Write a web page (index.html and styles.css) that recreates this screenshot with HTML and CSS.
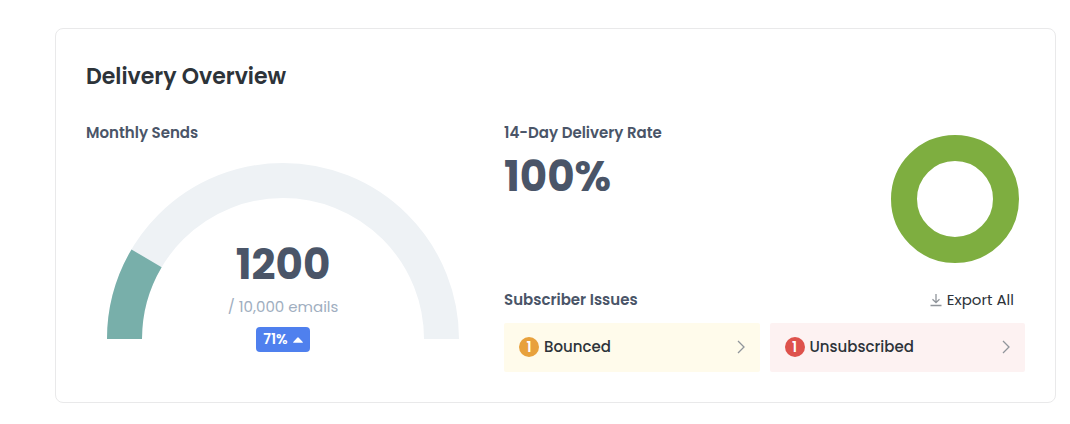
FILE: index.html
```html
<!DOCTYPE html>
<html lang="en">
<head>
    <meta charset="UTF-8">
    <meta name="viewport" content="width=device-width, initial-scale=1.0">
    <title>Delivery Overview</title>
    <link rel="stylesheet" href="styles.css">
</head>
<body>
    <main class="card">
        <h1 class="card-title">Delivery Overview</h1>

        <div class="columns">
            <section class="sends">
                <h2 class="label">Monthly Sends</h2>
                <div class="gauge">
                    <svg class="gauge-chart" viewBox="0 0 352 176" aria-hidden="true">
                        <path class="gauge-track" d="M17.5 176a158.5 158.5 0 0 1 317 0"/>
                        <path class="gauge-fill" d="M17.5 176a158.5 158.5 0 0 1 317 0" pathLength="100" stroke-dasharray="17 100"/>
                    </svg>
                    <div class="gauge-text">
                        <strong class="number">1200</strong>
                        <span class="limit">/ 10,000 emails</span>
                        <span class="change">71%
                            <svg width="10" height="6" viewBox="0 0 10 6" aria-hidden="true"><path d="M.6 5.8Q-.3 5.6.5 4.7L4.2.7Q5 0 5.8.7L9.5 4.7Q10.3 5.6 9.4 5.8Z" fill="currentColor"/></svg>
                        </span>
                    </div>
                </div>
            </section>

            <section class="delivery">
                <div class="rate">
                    <div>
                        <h2 class="label">14-Day Delivery Rate</h2>
                        <strong class="number">100%</strong>
                    </div>
                    <svg class="donut" viewBox="0 0 128 128" aria-hidden="true">
                        <circle cx="64" cy="64" r="51"/>
                    </svg>
                </div>

                <div class="issues-header">
                    <h2 class="label">Subscriber Issues</h2>
                    <button type="button" class="export">
                        <svg width="12" height="14" viewBox="0 0 12 14" aria-hidden="true"><path d="M6 1v8.5M2.500 6.300L6 9.700l3.500-3.400M.5 12.500h11"/></svg>
                        Export All
                    </button>
                </div>

                <div class="issues">
                    <a class="issue bounced" href="#bounced">
                        <span class="count">1</span>
                        <span>Bounced</span>
                        <svg class="chevron" width="8" height="14" viewBox="0 0 8 14" aria-hidden="true"><path d="M1 1l6 6-6 6"/></svg>
                    </a>
                    <a class="issue unsubscribed" href="#unsubscribed">
                        <span class="count">1</span>
                        <span>Unsubscribed</span>
                        <svg class="chevron" width="8" height="14" viewBox="0 0 8 14" aria-hidden="true"><path d="M1 1l6 6-6 6"/></svg>
                    </a>
                </div>
            </section>
        </div>
    </main>
</body>
</html>
```

FILE: styles.css
```css
* {
    box-sizing: border-box;
}

body {
    margin: 0;
    padding: 28px 14px 20px 55px;
    background-color: #fff;
    color: #2d3339;
    font-family: Poppins, Inter, sans-serif;
    font-size: 15px;
    line-height: 20px;
}

.card {
    border: 1px solid #e9e9ea;
    border-radius: 8px;
    padding: 30px;
}

.card-title {
    margin: 0 0 28px;
    font-size: 22px;
    font-weight: 600;
    line-height: 36px;
}

.columns {
    display: grid;
    grid-template-columns: 394fr 521fr;
    gap: 24px;
}

.label {
    margin: 0;
    color: #4a5568;
    font-size: 15px;
    font-weight: 600;
    line-height: 20px;
}

.number {
    display: block;
    color: #4a5568;
    font-size: 42px;
    font-weight: 700;
    line-height: 60px;
}

/* Gauge and its text share one grid cell */
.gauge {
    display: grid;
    margin-top: 20px;
    padding: 0 21px;
}

.gauge-chart,
.gauge-text {
    grid-area: 1 / 1;
}

.gauge-chart {
    width: 100%;
}

.gauge-chart path {
    fill: none;
    stroke-width: 35;
}

.gauge-track {
    stroke: #eef2f5;
}

.gauge-fill {
    stroke: #78afaa;
}

.gauge-text {
    display: flex;
    flex-direction: column;
    align-items: center;
    padding-top: 72px;
}

.limit {
    margin-top: 2px;
    color: #a0aec0;
}

.change {
    display: flex;
    align-items: center;
    gap: 5px;
    margin-top: 10px;
    padding: 0 7px;
    border-radius: 4px;
    background-color: #4f80ee;
    color: #fff;
    font-size: 14px;
    font-weight: 600;
    line-height: 25px;
}

.rate {
    display: flex;
    justify-content: space-between;
    padding-right: 6px;
}

.rate .number {
    margin-top: 4px;
}

.donut {
    width: 128px;
    height: 128px;
    margin-top: 12px;
}

.donut circle {
    fill: none;
    stroke: #7eae40;
    stroke-width: 26;
}

.issues-header {
    display: flex;
    justify-content: space-between;
    margin-top: 27px;
    padding-right: 11px;
}

.export {
    display: flex;
    align-items: center;
    gap: 5px;
    padding: 0;
    border: none;
    background: none;
    color: #2d3339;
    font: inherit;
    cursor: pointer;
}

.export svg,
.chevron {
    fill: none;
    stroke: #90959b;
    stroke-width: 1.3;
}

.issues {
    display: grid;
    grid-template-columns: 1fr 1fr;
    gap: 10px;
    margin-top: 13px;
}

.issue {
    display: flex;
    align-items: center;
    gap: 5px;
    padding: 14px 15px 15px;
    border-radius: 2px;
    color: #2d3339;
    font-weight: 500;
    text-decoration: none;
}

.bounced {
    background-color: #fffbeb;
}

.unsubscribed {
    background-color: #fdf2f2;
}

.count {
    width: 20px;
    border-radius: 50%;
    background-color: #e8a13c;
    color: #fff;
    font-size: 14px;
    font-weight: 600;
    text-align: center;
}

.unsubscribed .count {
    background-color: #de524c;
}

.chevron {
    margin-left: auto;
}
```
